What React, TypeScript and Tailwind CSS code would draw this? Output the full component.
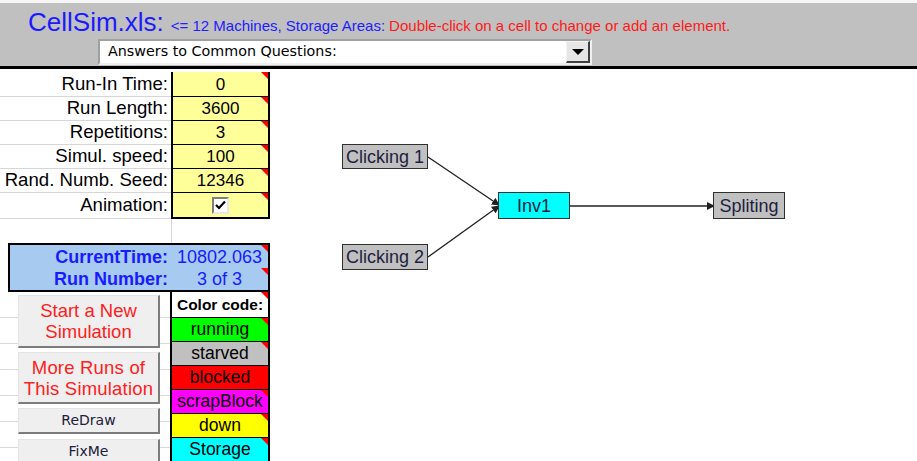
import React from 'react';

// little red comment marker in the top-right corner of a cell
function Flag() {
    return <span className="absolute right-0 top-0 h-0 w-0 border-l-[7px] border-t-[7px] border-l-transparent border-t-[#ff0000]" />;
}

const inputs = [
    { label: 'Run-In Time:', value: '0' },
    { label: 'Run Length:', value: '3600' },
    { label: 'Repetitions:', value: '3' },
    { label: 'Simul. speed:', value: '100' },
    { label: 'Rand. Numb. Seed:', value: '12346' },
];

const colorCodes = [
    { name: 'running', bg: 'bg-[#00ff00]' },
    { name: 'starved', bg: 'bg-[#c0c0c0]' },
    { name: 'blocked', bg: 'bg-[#ff0000]' },
    { name: 'scrapBlock', bg: 'bg-[#ff00ff]' },
    { name: 'down', bg: 'bg-[#ffff00]' },
    { name: 'Storage', bg: 'bg-[#00ffff]' },
];

function SheetButton({ children, className }: { children: React.ReactNode; className: string }) {
    return (
        <div
            className={`ml-[18px] w-[142px] shrink-0 flex flex-col items-center justify-center bg-[#efefef] border border-t-[#e4e4e4] border-l-[#e4e4e4] border-r-2 border-b-2 border-r-[#7c7c7c] border-b-[#7c7c7c] ${className}`}
        >
            {children}
        </div>
    );
}

function Node({ label, x, y, w, h, cyan }: { label: string; x: number; y: number; w: number; h: number; cyan?: boolean }) {
    return (
        <div
            className={`absolute flex items-center justify-center border border-[#303030] text-[18px] leading-none text-[#1e1e40] ${cyan ? 'bg-[#00ffff]' : 'bg-[#c0c0c0]'}`}
            style={{ left: x, top: y, width: w, height: h }}
        >
            {label}
        </div>
    );
}

export default function App() {
    return (
        <div className="w-[917px] h-[461px] overflow-hidden bg-white font-['Liberation_Sans',Arial,sans-serif] text-black">
            {/* title bar */}
            <div className="h-[3px] bg-[#f6f6f6]" />
            <div className="h-[66px] bg-[#c0c0c0] border-b-[3px] border-black">
                <div className="flex items-baseline pl-[28px] pt-[6px] leading-none whitespace-nowrap">
                    <span className="text-[26px] text-[#1a1aff]">CellSim.xls:</span>
                    <span className="ml-[7px] text-[15px] text-[#2020ff]">&lt;= 12 Machines, Storage Areas:</span>
                    <span className="ml-[4px] text-[15px] text-[#ff1a1a]">Double-click on a cell to change or add an element.</span>
                </div>
                <div className="ml-[98px] mt-[4px] flex h-[26px] w-[494px] items-center justify-between bg-white border-2 border-t-[#a0a0a0] border-l-[#a0a0a0] border-r-[#f0f0f0] border-b-[#f0f0f0]">
                    <span className="pl-[8px] font-['DejaVu_Sans',sans-serif] text-[14.3px] text-black">Answers to Common Questions:</span>
                    <div className="flex h-[22px] w-[24px] items-center justify-center bg-[#e6e6e6] border border-t-[#f4f4f4] border-l-[#f4f4f4] border-r-2 border-b-2 border-r-[#404040] border-b-[#404040]">
                        <span className="h-0 w-0 border-x-[6px] border-t-[6px] border-x-transparent border-t-black" />
                    </div>
                </div>
            </div>

            <div className="flex h-[392px]">
                {/* settings column */}
                <div className="w-[270px] flex flex-col">
                    {inputs.map((row, i) => (
                        <div key={row.label} className={`flex shrink-0 ${i === 0 ? 'h-[28px] pt-[3px]' : 'h-[24px]'}`}>
                            <div className="w-[171px] flex items-center justify-end pr-[3px] border-b border-[#d6d6d6] text-[18.6px] leading-none">
                                {row.label}
                            </div>
                            <div className="relative w-[99px] flex items-center justify-center bg-[#ffff99] border-x-2 border-b border-black text-[17px] leading-none">
                                {row.value}
                                <Flag />
                            </div>
                        </div>
                    ))}
                    <div className="flex h-[26px] shrink-0">
                        <div className="w-[171px] flex items-center justify-end pr-[3px] border-b border-[#d6d6d6] text-[18.6px] leading-none">
                            Animation:
                        </div>
                        <div className="relative w-[99px] flex items-center justify-center bg-[#ffff99] border-x-2 border-b-2 border-black">
                            <div className="flex h-[17px] w-[17px] items-center justify-center bg-white border-2 border-t-[#808080] border-l-[#808080] border-r-[#e8e8e8] border-b-[#e8e8e8]">
                                <svg width="11" height="10" viewBox="0 0 11 10">
                                    <path d="M1 5 L4 8 L10 1.5" fill="none" stroke="black" strokeWidth="2.2" />
                                </svg>
                            </div>
                            <Flag />
                        </div>
                    </div>
                    <div className="flex h-[24px] shrink-0">
                        <div className="w-[172px] border-r border-[#d6d6d6]" />
                    </div>

                    {/* run status */}
                    <div className="ml-[8px] h-[49px] shrink-0 bg-[#a6caf0] border-2 border-black flex flex-col text-[18px] leading-none text-[#1a1aff]">
                        <div className="flex h-[23px] items-center">
                            <span className="w-[161px] pr-[3px] text-right font-bold">CurrentTime:</span>
                            <span className="relative flex h-full flex-1 items-center justify-center">
                                10802.063
                                <Flag />
                            </span>
                        </div>
                        <div className="flex h-[22px] items-center">
                            <span className="w-[161px] pr-[3px] text-right font-bold">Run Number:</span>
                            <span className="relative flex h-full flex-1 items-center justify-center">
                                3 of 3
                                <Flag />
                            </span>
                        </div>
                    </div>

                    <div className="flex flex-1 min-h-0">
                        {/* macro buttons */}
                        <div className="w-[170px] flex flex-col gap-[4px] pt-[3px] bg-[repeating-linear-gradient(to_bottom,transparent_0,transparent_25px,#dadada_25px,#dadada_26px)]">
                            <SheetButton className="h-[53px] text-[18.5px] leading-[21px] text-[#ff2020]">
                                <span>Start a New</span>
                                <span>Simulation</span>
                            </SheetButton>
                            <SheetButton className="h-[52px] text-[18.5px] leading-[21px] text-[#ff2020] tracking-[0.2px]">
                                <span>More Runs of</span>
                                <span>This Simulation</span>
                            </SheetButton>
                            <SheetButton className="h-[26px] font-['DejaVu_Sans',sans-serif] text-[14px] text-[#20203a]">
                                ReDraw
                            </SheetButton>
                            <SheetButton className="h-[26px] mt-[1px] font-['DejaVu_Sans',sans-serif] text-[14px] text-[#20203a]">
                                FixMe
                            </SheetButton>
                        </div>

                        {/* legend */}
                        <div className="w-[100px] flex flex-col border-x-2 border-black text-[17.5px] leading-none">
                            <div className="relative flex h-[26px] shrink-0 items-center justify-center bg-white border-b border-black font-bold text-[15.5px]">
                                Color code:
                                <Flag />
                            </div>
                            {colorCodes.map((c) => (
                                <div key={c.name} className={`relative flex h-[24px] shrink-0 items-center justify-center border-b border-black ${c.bg}`}>
                                    {c.name}
                                    <Flag />
                                </div>
                            ))}
                        </div>
                    </div>
                </div>

                {/* cell layout diagram */}
                <div className="relative flex-1">
                    <svg className="absolute inset-0" width="647" height="392">
                        <defs>
                            <marker id="head" markerWidth="8" markerHeight="8" refX="7" refY="4" orient="auto" markerUnits="userSpaceOnUse">
                                <path d="M0 0 L8 4 L0 8 Z" fill="#202020" />
                            </marker>
                        </defs>
                        <line x1="158" y1="88" x2="229" y2="136" stroke="#202020" strokeWidth="1.3" markerEnd="url(#head)" />
                        <line x1="158" y1="188" x2="229" y2="137" stroke="#202020" strokeWidth="1.3" markerEnd="url(#head)" />
                        <line x1="300" y1="137" x2="444" y2="137" stroke="#202020" strokeWidth="1.3" markerEnd="url(#head)" />
                    </svg>
                    <Node label="Clicking 1" x={72} y={75} w={86} h={25} />
                    <Node label="Clicking 2" x={72} y={175} w={86} h={26} />
                    <Node label="Inv1" x={228} y={123} w={72} h={27} cyan />
                    <Node label="Spliting" x={443} y={123} w={72} h={27} />
                </div>
            </div>
        </div>
    );
}
